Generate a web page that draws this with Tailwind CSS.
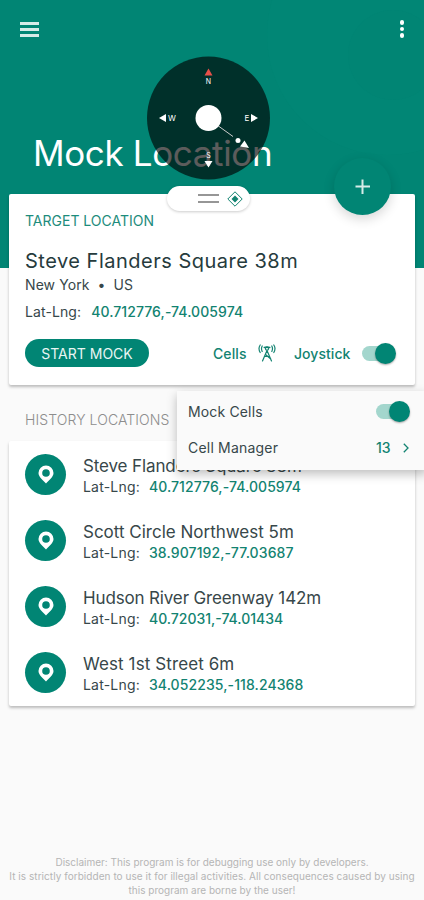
<!DOCTYPE html>
<html lang="en">
<head>
<meta charset="utf-8">
<title>Mock Location</title>
<script src="https://cdn.jsdelivr.net/npm/@tailwindcss/browser@4"></script>
</head>
<body class="relative w-[424px] h-[900px] overflow-hidden bg-[#fafafa] font-['Inter','Noto_Sans',sans-serif] text-[#37474a] whitespace-nowrap">

<!-- Header backdrop -->
<div class="absolute inset-x-0 top-0 h-[268px] overflow-hidden bg-[#018574]">
  <div class="absolute left-[267px] -top-[85px] size-[240px] rounded-full bg-[#018876]/50"></div>
  <div class="absolute left-[348px] top-[10px] size-[90px] rounded-full bg-[#018373]/50"></div>
</div>

<div class="relative flex h-full flex-col">
  <header class="flex h-[194px] flex-col">
    <div class="flex h-[58px] items-center justify-between pl-5 pr-[20px]">
      <div class="flex flex-col gap-[3px]">
        <span class="h-[3px] w-[19px] bg-[#d5ece8]"></span>
        <span class="h-[3px] w-[19px] bg-[#d5ece8]"></span>
        <span class="h-[3px] w-[19px] bg-[#d5ece8]"></span>
      </div>
      <div class="flex flex-col gap-[2px]">
        <span class="size-[4.5px] rounded-full bg-white"></span>
        <span class="size-[4.5px] rounded-full bg-white"></span>
        <span class="size-[4.5px] rounded-full bg-white"></span>
      </div>
    </div>
    <h1 class="mt-[73px] pl-[33px] text-[35px] leading-[44px] font-normal tracking-[-0.37px] text-white">Mock Location</h1>
  </header>

  <!-- Target card -->
  <section class="mx-[9px] flex h-[191px] flex-col rounded-[2px] bg-white px-4 shadow-[0_2px_3px_rgba(0,0,0,0.25)]">
    <h2 class="mt-[17px] text-[14px] leading-5 text-[#1d8c7c]">TARGET LOCATION</h2>
    <p class="mt-[17px] text-[20px] leading-[26px] tracking-[0.5px] text-[#263b3d]">Steve Flanders Square 38m</p>
    <p class="text-[14px] leading-[21px] tracking-[0.08px]">New York&nbsp; •&nbsp; US</p>
    <p class="mt-[7px] flex gap-[10px] text-[14px] leading-5"><span class="tracking-[0.1px]">Lat-Lng:</span><span class="font-medium tracking-[0.08px] text-[#128371]">40.712776,-74.005974</span></p>
    <div class="mt-[16px] flex h-[30px] items-center text-[#128371]">
      <button class="h-[28px] w-[124px] rounded-full bg-[#018574] text-[14px] text-[#e9f5f3]">START MOCK</button>
      <span class="ml-[64px] w-[45px] text-[14px] font-medium tracking-[0.1px]">Cells</span>
      <svg class="size-[18px]" viewBox="0 0 18 18" fill="none" stroke="#128371" stroke-width="1.2" stroke-linecap="round">
        <path d="M4.200 2Q2.800 4.500 4.200 7.500M13.800 2Q15.200 4.500 13.800 7.500M2.200 1Q-.2 4.500 2.200 8.500M15.800 1Q18.200 4.500 15.800 8.500"/>
        <path d="M6.200 3.500L9 3L11.800 3.500" stroke-width="1.400"/>
        <circle cx="9" cy="4.700" r="1.500"/>
        <path d="M9 6.500L4.500 17M9 6.500L13.500 17M7.500 10.500L12.800 15M7 12.500H11"/>
      </svg>
      <span class="ml-[18px] w-[68px] text-[14px] font-medium tracking-[0.05px]">Joystick</span>
      <span class="relative h-[15px] w-[32px] rounded-full bg-[#a3d6cd]"><span class="absolute -top-[3px] right-[-2px] size-[21px] rounded-full bg-[#018574] shadow-[0_1px_2px_rgba(0,0,0,0.35)]"></span></span>
    </div>
  </section>

  <h2 class="mt-[25px] pl-[25px] text-[14px] leading-5 font-light tracking-[0.1px] text-[#8d8d8d]">HISTORY LOCATIONS</h2>

  <!-- History card -->
  <section class="mx-[9px] mt-[11px] flex h-[265px] flex-col rounded-[2px] bg-white px-4 shadow-[0_2px_3px_rgba(0,0,0,0.25)]">
    <div class="flex h-[66px] items-center gap-[17px]">
      <span class="flex size-[41px] items-center justify-center rounded-full bg-[#018574]"><svg class="h-[19px] w-4" viewBox="0 0 16 19"><path fill="#fff" fill-rule="evenodd" d="M8 .5a7.500 7.500 0 0 1 7.500 7.500c0 4-4.500 7-7.500 10.500C5 15 .5 12 .5 8A7.500 7.500 0 0 1 8 .5Zm0 3.700a3.800 3.800 0 1 0 0 7.600a3.800 3.800 0 0 0 0-7.600Z"/></svg></span>
      <div class="pt-[2px]"><p class="text-[17px] leading-[22px] tracking-[-0.12px]">Steve Flanders Square 38m</p><p class="flex gap-[9px] text-[14px] leading-[19px]"><span class="tracking-[0.2px]">Lat-Lng:</span><span class="font-medium tracking-[0.08px] text-[#128371]">40.712776,-74.005974</span></p></div>
    </div>
    <div class="flex h-[66px] items-center gap-[17px]">
      <span class="flex size-[41px] items-center justify-center rounded-full bg-[#018574]"><svg class="h-[19px] w-4" viewBox="0 0 16 19"><path fill="#fff" fill-rule="evenodd" d="M8 .5a7.500 7.500 0 0 1 7.500 7.500c0 4-4.500 7-7.500 10.500C5 15 .5 12 .5 8A7.500 7.500 0 0 1 8 .5Zm0 3.700a3.800 3.800 0 1 0 0 7.600a3.800 3.800 0 0 0 0-7.600Z"/></svg></span>
      <div class="pt-[2px]"><p class="text-[17px] leading-[22px]">Scott Circle Northwest 5m</p><p class="flex gap-[9px] text-[14px] leading-[19px]"><span class="tracking-[0.2px]">Lat-Lng:</span><span class="font-medium tracking-[0.12px] text-[#128371]">38.907192,-77.03687</span></p></div>
    </div>
    <div class="flex h-[66px] items-center gap-[17px]">
      <span class="flex size-[41px] items-center justify-center rounded-full bg-[#018574]"><svg class="h-[19px] w-4" viewBox="0 0 16 19"><path fill="#fff" fill-rule="evenodd" d="M8 .5a7.500 7.500 0 0 1 7.500 7.500c0 4-4.500 7-7.500 10.500C5 15 .5 12 .5 8A7.500 7.500 0 0 1 8 .5Zm0 3.700a3.800 3.800 0 1 0 0 7.600a3.800 3.800 0 0 0 0-7.600Z"/></svg></span>
      <div class="pt-[2px]"><p class="text-[17px] leading-[22px] tracking-[-0.15px]">Hudson River Greenway 142m</p><p class="flex gap-[9px] text-[14px] leading-[19px]"><span class="tracking-[0.2px]">Lat-Lng:</span><span class="font-medium text-[#128371]">40.72031,-74.01434</span></p></div>
    </div>
    <div class="flex h-[66px] items-center gap-[17px]">
      <span class="flex size-[41px] items-center justify-center rounded-full bg-[#018574]"><svg class="h-[19px] w-4" viewBox="0 0 16 19"><path fill="#fff" fill-rule="evenodd" d="M8 .5a7.500 7.500 0 0 1 7.500 7.500c0 4-4.500 7-7.500 10.500C5 15 .5 12 .5 8A7.500 7.500 0 0 1 8 .5Zm0 3.700a3.800 3.800 0 1 0 0 7.600a3.800 3.800 0 0 0 0-7.600Z"/></svg></span>
      <div class="pt-[2px]"><p class="text-[17px] leading-[22px] tracking-[0.1px]">West 1st Street 6m</p><p class="flex gap-[9px] text-[14px] leading-[19px]"><span class="tracking-[0.2px]">Lat-Lng:</span><span class="font-medium tracking-[0.1px] text-[#128371]">34.052235,-118.24368</span></p></div>
    </div>
  </section>

  <footer class="mt-auto pb-[3px] text-center text-[10px] leading-[14px] text-[#b5b5b5]">
    <p>Disclaimer: This program is for debugging use only by developers.</p>
    <p class="tracking-[0.05px]">It is strictly forbidden to use it for illegal activities. All consequences caused by using</p>
    <p>this program are borne by the user!</p>
  </footer>
</div>

<!-- Joystick overlay -->
<svg class="absolute left-[147px] top-[56px] size-[124px]" viewBox="147 56 124 124" font-family="Inter, sans-serif" font-size="7" fill="#fff" text-anchor="middle">
  <circle cx="208.500" cy="118" r="61.500" fill="#000" fill-opacity=".64"/>
  <path d="M208.500 68.500L212.500 75.500H204.500Z" fill="#e5504a"/>
  <path d="M208.500 167.500L204.500 161H212.500ZM159 118L166 114V122ZM258 118L251 114V122Z"/>
  <text x="208.500" y="83.500">N</text><text x="208.500" y="158">S</text><text x="172" y="120.500" font-size="8">W</text><text x="247" y="120.500" font-size="8">E</text>
  <path d="M217 125L233 136.500" stroke="#ccc"/>
  <circle cx="208.500" cy="118" r="13"/>
  <circle cx="238" cy="140.500" r="2.500"/><path d="M244.500 140.500L249 148L240 146.500Z"/>
</svg>

<!-- Drag handle -->
<div class="absolute left-[167px] top-[186px] flex h-[25px] w-[83px] items-center rounded-full bg-white pl-[31px] shadow-[0_1px_3px_rgba(0,0,0,0.2)]">
  <span class="h-[9px] w-[21px] border-y-2 border-[#969696]"></span>
  <svg class="ml-2 size-4" viewBox="0 0 16 16"><path d="M8 .8L15.200 8L8 15.200L.8 8Z" fill="none" stroke="#128371" stroke-width="1"/><path d="M8 4.500L11.500 8L8 11.500L4.500 8Z" fill="#128371"/></svg>
</div>

<!-- Add button -->
<button class="absolute left-[334px] top-[158px] flex size-[57px] items-center justify-center rounded-full bg-[#018574] shadow-[0_4px_12px_rgba(0,0,0,0.16)]">
  <svg class="size-4" viewBox="0 0 16 16"><path d="M7.500 .5V15M.5 7.500H15" stroke="#d5ece8" stroke-width="2"/></svg>
</button>

<!-- Cells popup -->
<div class="absolute left-[177px] top-[391px] flex h-[79px] w-[250px] flex-col bg-[#fafafa] pl-[11px] pt-[3px] text-[14px] shadow-[0_4px_10px_rgba(0,0,0,0.26)]">
  <div class="flex h-9 items-center"><span class="w-[188px] -mt-[2px] tracking-[0.15px]">Mock Cells</span><span class="relative h-[15px] w-[32px] -mt-px rounded-full bg-[#a3d6cd]"><span class="absolute -top-[3px] right-[-2px] size-[21px] rounded-full bg-[#018574] shadow-[0_1px_2px_rgba(0,0,0,0.35)]"></span></span></div>
  <div class="flex h-9 items-center"><span class="w-[188px] -mt-[2px] tracking-[0.2px]">Cell Manager</span><span class="w-[27px] -mt-[2px] font-medium text-[#128371]">13</span><svg class="-mt-px h-[10px] w-[6px]" viewBox="0 0 6 10"><path d="M.8 .8L5 5L.8 9.200" fill="none" stroke="#128371" stroke-width="1.300"/></svg></div>
</div>
</body>
</html>
